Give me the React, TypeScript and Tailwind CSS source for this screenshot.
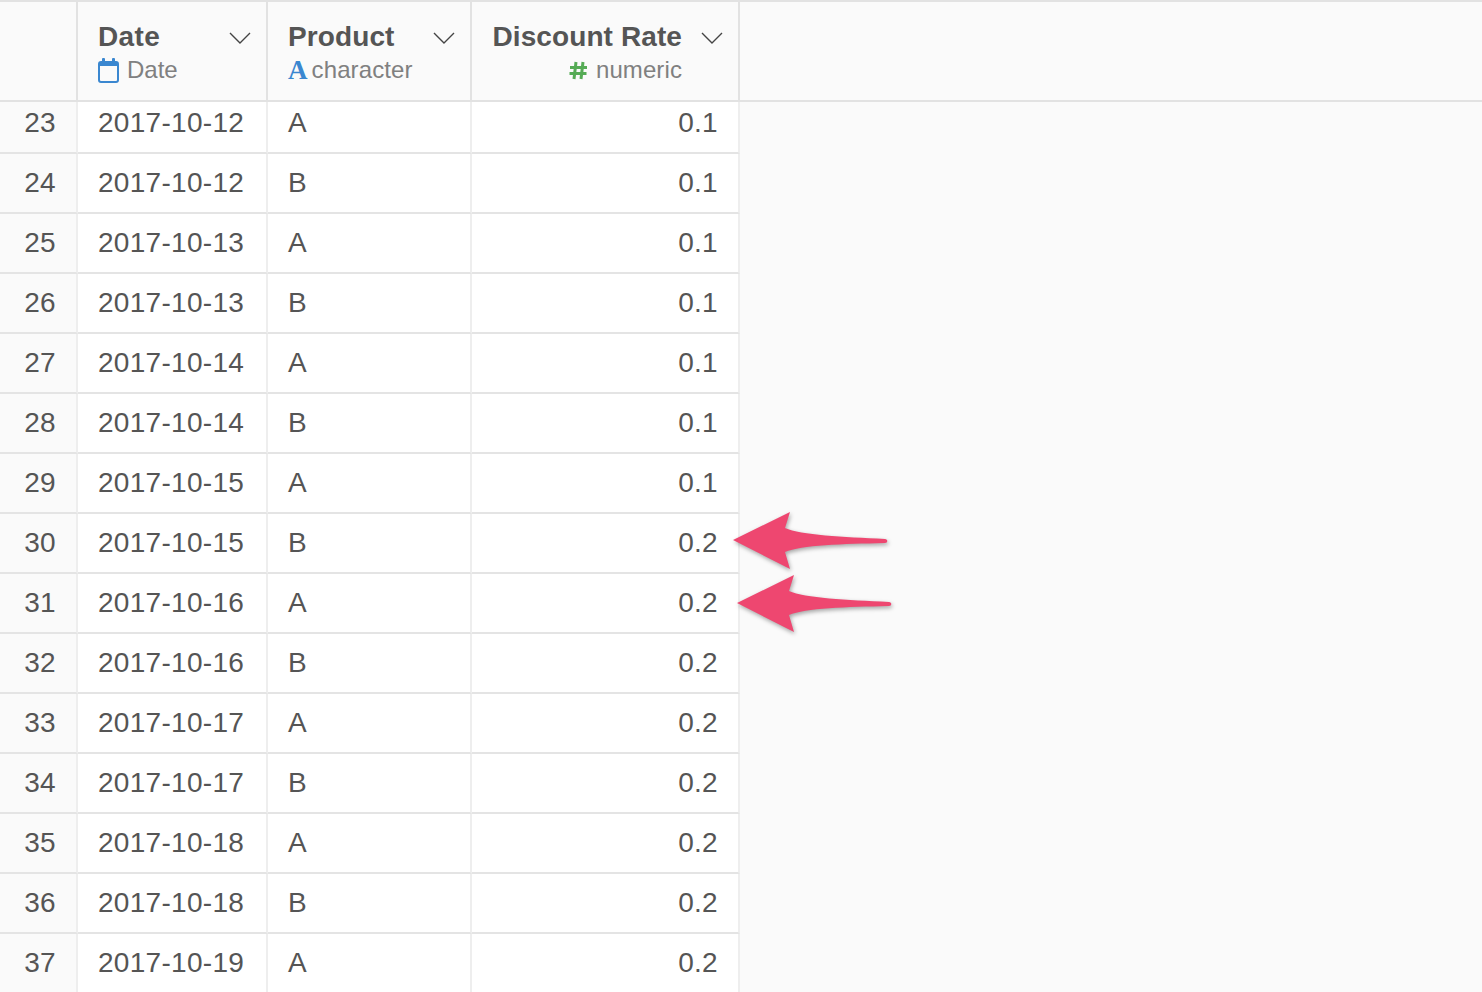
import React from "react";

const rows = [
  { id: 23, date: "2017-10-12", product: "A", rate: "0.1" },
  { id: 24, date: "2017-10-12", product: "B", rate: "0.1" },
  { id: 25, date: "2017-10-13", product: "A", rate: "0.1" },
  { id: 26, date: "2017-10-13", product: "B", rate: "0.1" },
  { id: 27, date: "2017-10-14", product: "A", rate: "0.1" },
  { id: 28, date: "2017-10-14", product: "B", rate: "0.1" },
  { id: 29, date: "2017-10-15", product: "A", rate: "0.1" },
  { id: 30, date: "2017-10-15", product: "B", rate: "0.2" },
  { id: 31, date: "2017-10-16", product: "A", rate: "0.2" },
  { id: 32, date: "2017-10-16", product: "B", rate: "0.2" },
  { id: 33, date: "2017-10-17", product: "A", rate: "0.2" },
  { id: 34, date: "2017-10-17", product: "B", rate: "0.2" },
  { id: 35, date: "2017-10-18", product: "A", rate: "0.2" },
  { id: 36, date: "2017-10-18", product: "B", rate: "0.2" },
  { id: 37, date: "2017-10-19", product: "A", rate: "0.2" },
];

function Chevron({ className }: { className: string }) {
  return (
    <svg className={className} width="22" height="12" viewBox="0 0 22 12" fill="none">
      <path d="M1 1L11 11L21 1" stroke="#444" strokeWidth="1.4" />
    </svg>
  );
}

function CalendarIcon() {
  return (
    <svg width="21" height="25" viewBox="0 0 21 25" className="mr-[8px] shrink-0">
      <rect x="1" y="4" width="19" height="20" rx="2" fill="none" stroke="#3a87d0" strokeWidth="2" />
      <rect x="1" y="4" width="19" height="4" rx="1" fill="#3a87d0" />
      <rect x="4" y="0" width="3" height="6" rx="1" fill="#3a87d0" />
      <rect x="14" y="0" width="3" height="6" rx="1" fill="#3a87d0" />
    </svg>
  );
}

function HashIcon() {
  return (
    <svg width="19" height="19" viewBox="0 0 19 19" className="mr-[8px] shrink-0">
      <path d="M7 1L5 18M14 1L12 18M1 6.5H18M0.5 12.5H17.5" fill="none" stroke="#55ab55" strokeWidth="3" />
    </svg>
  );
}

function Arrow({ className }: { className: string }) {
  return (
    <svg
      className={`absolute drop-shadow-[1px_2px_2px_rgba(0,0,0,0.35)] ${className}`}
      width="156"
      height="58"
      viewBox="0 0 156 58"
    >
      <path
        d="M0 28L57 0L52 16C68 23 110 25 152 27C155 27 155 31 152 31C110 32 68 33 52 40L57 57Z"
        fill="#ee4770"
      />
    </svg>
  );
}

export default function App() {
  return (
    <div className="relative h-[992px] w-[1482px] overflow-hidden bg-[#fafafa] font-['Liberation_Sans',sans-serif] text-[#555555]">
      {/* header */}
      <div className="flex h-[102px] border-y-2 border-[#e2e2e2]">
        <div className="w-[78px] border-r-2 border-[#e2e2e2]" />
        <div className="relative w-[190px] border-r-2 border-[#e2e2e2] pl-[20px]">
          <div className="mt-[17px] text-[28px] leading-[36px] font-bold tracking-[0.4px] text-[#555555]">Date</div>
          <div className="mt-[1px] flex items-center text-[24px] leading-[28px] text-[#808080]">
            <CalendarIcon />
            Date
          </div>
          <Chevron className="absolute left-[151px] top-[30px]" />
        </div>
        <div className="relative w-[204px] border-r-2 border-[#e2e2e2] pl-[20px]">
          <div className="mt-[17px] text-[28px] leading-[36px] font-bold tracking-[0.1px] text-[#555555]">Product</div>
          <div className="mt-[1px] flex items-center text-[24px] leading-[28px] tracking-[0.1px] text-[#808080]">
            <span className="mr-[4px] font-['Liberation_Serif',serif] text-[27px] font-bold text-[#3a87d0]">A</span>
            character
          </div>
          <Chevron className="absolute left-[165px] top-[30px]" />
        </div>
        <div className="relative w-[268px] border-r-2 border-[#e2e2e2] pr-[56px] text-right">
          <div className="mt-[17px] text-[28px] leading-[36px] font-bold tracking-[0.1px] text-[#555555]">Discount Rate</div>
          <div className="mt-[1px] flex items-center justify-end text-[24px] leading-[28px] tracking-[0.1px] text-[#808080]">
            <HashIcon />
            numeric
          </div>
          <Chevron className="absolute left-[229px] top-[30px]" />
        </div>
      </div>

      {/* rows */}
      {rows.map((row, i) => (
        <div key={row.id} className={`flex text-[28px] tracking-[0.3px] ${i === 0 ? "h-[52px]" : "h-[60px]"}`}>
          <div
            className={`flex w-[78px] items-center justify-end border-r-2 border-b-2 border-r-[#eeeeee] border-b-[#e4e4e4] bg-[#fafafa] pr-[20px] ${
              i === 0 ? "pb-[8px]" : ""
            }`}
          >
            {row.id}
          </div>
          <div
            className={`flex w-[190px] items-center border-r-2 border-b-2 border-r-[#eeeeee] border-b-[#e4e4e4] bg-white pl-[20px] ${
              i === 0 ? "pb-[8px]" : ""
            }`}
          >
            {row.date}
          </div>
          <div
            className={`flex w-[204px] items-center border-r-2 border-b-2 border-r-[#eeeeee] border-b-[#e4e4e4] bg-white pl-[20px] ${
              i === 0 ? "pb-[8px]" : ""
            }`}
          >
            {row.product}
          </div>
          <div
            className={`flex w-[268px] items-center justify-end border-r-2 border-b-2 border-r-[#eeeeee] border-b-[#e4e4e4] bg-white pr-[20px] ${
              i === 0 ? "pb-[8px]" : ""
            }`}
          >
            {row.rate}
          </div>
        </div>
      ))}

      <Arrow className="left-[733px] top-[512px]" />
      <Arrow className="left-[737px] top-[575px]" />
    </div>
  );
}
